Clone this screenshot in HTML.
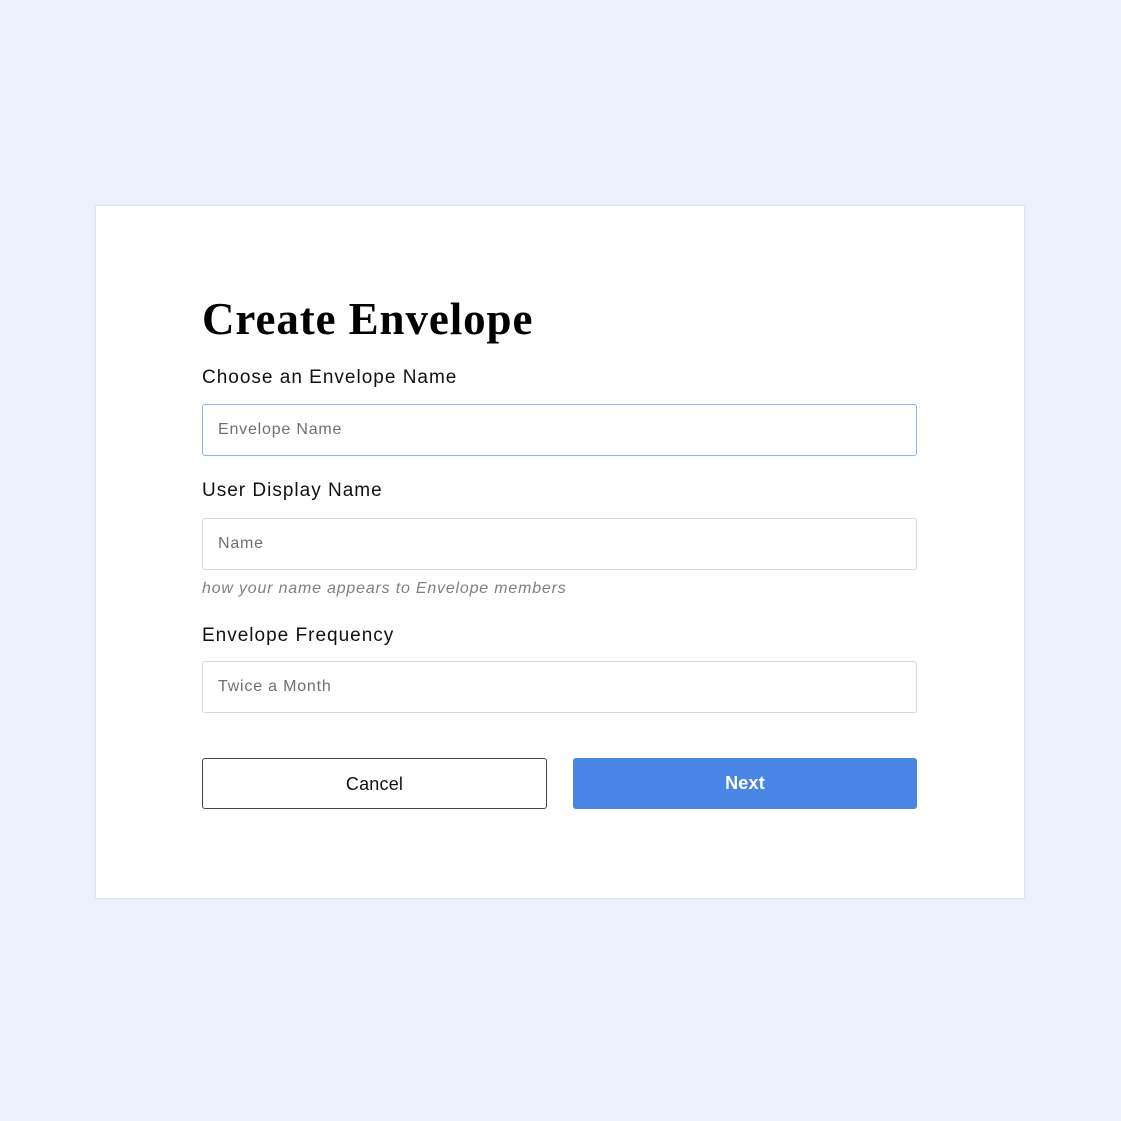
<!DOCTYPE html>
<html><head><style>
body{margin:0;width:1121px;height:1121px;background:#eaf0fc;position:relative;font-family:"Liberation Sans",sans-serif;overflow:hidden}
.card{position:absolute;left:95px;top:205px;width:928px;height:692px;background:#fff;border:1px solid #dde1ea;border-radius:2px}
.abs{position:absolute}
h1{position:absolute;left:202px;top:293px;margin:0;font-family:"Liberation Serif",serif;font-weight:bold;font-size:45px;color:#000;letter-spacing:0.9px}
.lbl{position:absolute;left:202px;font-size:19px;color:#111;letter-spacing:1px}
.inp{position:absolute;left:202px;border:1px solid #d9d9d9;border-radius:3px;box-sizing:border-box;width:715px;height:52px}
.inp span{position:absolute;left:15px;top:16px;font-size:16px;color:#6f6f6f;letter-spacing:0.8px}
.btn{position:absolute;top:758px;height:51px;width:345px;box-sizing:border-box;border-radius:3px;text-align:center;line-height:51px;font-size:18px;letter-spacing:0.2px}
</style></head><body>
<div class="card"></div>
<h1>Create Envelope</h1>
<div class="lbl" style="top:367px">Choose an Envelope Name</div>
<div class="inp" style="top:404px;border:1.5px solid #8fb1ef"><span>Envelope Name</span></div>
<div class="lbl" style="top:480px">User Display Name</div>
<div class="inp" style="top:518px"><span>Name</span></div>
<div class="abs" style="left:202px;top:580px;font-size:16px;font-style:italic;color:#808080;letter-spacing:0.8px">how your name appears to Envelope members</div>
<div class="lbl" style="top:625px">Envelope Frequency</div>
<div class="inp" style="top:661px"><span>Twice a Month</span></div>
<div class="btn" style="left:202px;border:1.5px solid #444;color:#111">Cancel</div>
<div class="btn" style="left:573px;width:344px;background:#4a86e6;color:#fff;font-weight:bold">Next</div>
</body></html>
